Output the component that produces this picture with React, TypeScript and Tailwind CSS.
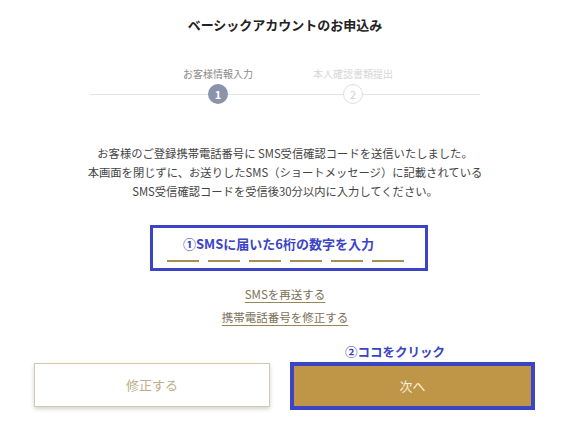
import React from 'react'

const font = { fontFamily: '"Noto Sans CJK JP", "Noto Sans", sans-serif' }

export default function App() {
  return (
    <div className="w-[576px] h-[442px] bg-white overflow-hidden" style={font}>
      <div className="w-[570px] flex flex-col items-center">
        {/* タイトル */}
        <h1 className="mt-[15px] text-[13px] leading-[19px] font-bold text-[#222]">
          ベーシックアカウントのお申込み
        </h1>
      </div>

      {/* ステップ */}
      <div className="ml-[90px] w-[390px] mt-[33px]">
        <div className="flex h-[14px] text-[10px] leading-[14px] whitespace-nowrap">
          <div className="w-[128px]" />
          <div className="w-0 flex justify-center text-[#8a8a8a]">お客様情報入力</div>
          <div className="w-[135px]" />
          <div className="w-0 flex justify-center text-[#d6d6d6]">本人確認書類提出</div>
        </div>
        <div className="flex items-center mt-[3px]">
          <div className="w-[118px] h-px bg-[#e4e4e4]" />
          <div className="w-5 h-5 rounded-full bg-[#8a93a9] text-white text-[11px] font-bold flex items-center justify-center">
            1
          </div>
          <div className="w-[115px] h-px bg-[#e4e4e4]" />
          <div className="w-5 h-5 rounded-full border border-[#dedede] bg-white text-[#cfcfcf] text-[11px] flex items-center justify-center">
            2
          </div>
          <div className="flex-1 h-px bg-[#e4e4e4]" />
        </div>
      </div>

      {/* 説明文 */}
      <div className="w-[570px] flex flex-col items-center">
        <p className="mt-[40px] text-[11.3px] leading-[19px] text-[#444] text-center">
          お客様のご登録携帯電話番号に SMS受信確認コードを送信いたしました。
          <br />
          本画面を閉じずに、お送りしたSMS（ショートメッセージ）に記載されている
          <br />
          SMS受信確認コードを受信後30分以内に入力してください。
        </p>
      </div>

      {/* 入力欄 */}
      <div className="ml-[150px] mt-[24px] w-[278px] h-[46px] border-[3px] border-[#3b44c4]">
        <div className="pl-[30px] pt-[8px] text-[13px] leading-[16px] font-bold text-[#3b44c4] whitespace-nowrap">
          ①SMSに届いた6桁の数字を入力
        </div>
        <div className="flex gap-[9px] pl-[14px] mt-[8px]">
          {[0, 1, 2, 3, 4, 5].map((i) => (
            <div key={i} className="w-[32px] h-[2px] bg-[#a48f52]" />
          ))}
        </div>
      </div>

      {/* リンク */}
      <div className="w-[570px] flex flex-col items-center mt-[15px] gap-[6px] text-[11.5px] leading-[17px] text-[#7d7158]">
        <a className="underline decoration-[#9a8655] underline-offset-[3px]">SMSを再送する</a>
        <a className="underline decoration-[#9a8655] underline-offset-[3px]">携帯電話番号を修正する</a>
      </div>

      {/* ボタン */}
      <div className="ml-[345px] mt-[18px] text-[12.5px] leading-[16px] font-bold text-[#3b44c4]">
        ②ココをクリック
      </div>
      <div className="flex items-start ml-[34px] mt-[2px] gap-[20px]">
        <button className="mt-[1px] w-[236px] h-[44px] bg-white border border-[#d3cbb0] shadow-[0_2px_4px_rgba(0,0,0,0.18)] text-[13px] text-[#bcae88]">
          修正する
        </button>
        <div className="w-[245px] h-[48px] border-4 border-[#3b44c4] flex">
          <button className="flex-1 bg-[#bf9548] text-[13px] text-[#fbf1dc]">次へ</button>
        </div>
      </div>
    </div>
  )
}
